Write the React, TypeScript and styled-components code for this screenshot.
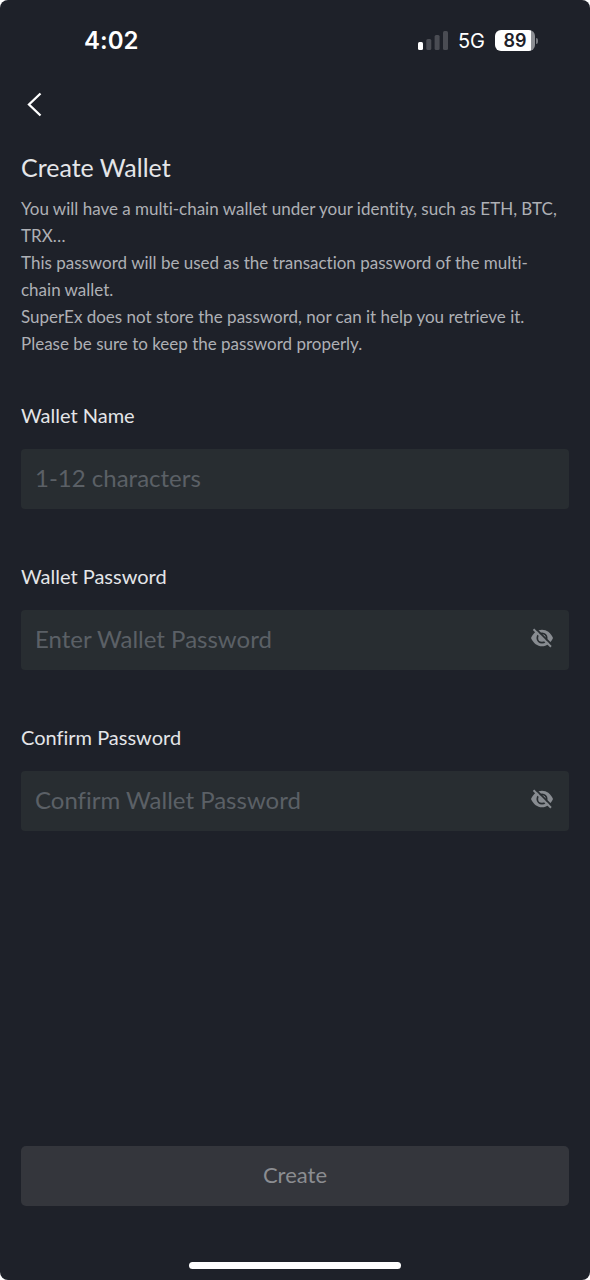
import React, { useState } from 'react';
import styled, { createGlobalStyle } from 'styled-components';

const GlobalStyle = createGlobalStyle`
  *, *::before, *::after { box-sizing: border-box; }
  body { margin: 0; background: #ffffff; }
`;

const uiFont = `Lato, "Noto Sans", "Liberation Sans", sans-serif`;
const systemFont = `Inter, "Liberation Sans", sans-serif`;

const Screen = styled.div`
  display: flex;
  flex-direction: column;
  min-height: 100vh;
  border-radius: 8px;
  background: #1e2129;
  color: #e4e5e8;
  font-family: ${uiFont};
  font-variant-ligatures: none;
`;

const StatusBar = styled.header`
  display: flex;
  align-items: center;
  justify-content: space-between;
  height: 80px;
  padding: 1px 52px 0 84px;
  color: #ffffff;
  font-family: ${systemFont};
`;

const Clock = styled.time`
  font-size: 24px;
  line-height: 32px;
  font-weight: 600;
`;

const Indicators = styled.div`
  display: flex;
  align-items: center;
  gap: 10px;
`;

const Network = styled.span`
  font-size: 20px;
  line-height: 24px;
`;

const Battery = styled.span`
  display: flex;
  align-items: center;
  gap: 1px;
`;

const BatteryBody = styled.span`
  width: 40px;
  height: 21px;
  border-radius: 6px;
  background: linear-gradient(to right, #ffffff 89%, #8c8e93 89%);
  color: #1e2129;
  font-size: 18px;
  line-height: 21px;
  font-weight: 600;
  text-align: center;
`;

const BatteryTip = styled.span`
  width: 2px;
  height: 6px;
  border-radius: 0 2px 2px 0;
  background: #77797f;
`;

const NavBar = styled.nav`
  display: flex;
  align-items: center;
  height: 48px;
  padding: 0 20px;
`;

const IconButton = styled.button`
  display: flex;
  flex: none;
  padding: 0;
  border: 0;
  background: none;
  color: inherit;
  cursor: pointer;
`;

const Form = styled.form`
  display: flex;
  flex: 1;
  flex-direction: column;
  padding: 23px 21px 75px;
`;

const Title = styled.h1`
  margin: 0;
  font-size: 25px;
  line-height: 32px;
  font-weight: 400;
`;

const Intro = styled.div`
  margin-top: 12px;
  padding-right: 8px;
  color: #aeb0b5;
  font-size: 17px;
  line-height: 27px;
`;

const Paragraph = styled.p`
  margin: 0;
`;

const Fields = styled.div`
  display: flex;
  flex-direction: column;
  gap: 56px;
  margin: 47px 0 60px;
`;

const FieldGroup = styled.div`
  display: flex;
  flex-direction: column;
  gap: 23px;
`;

const Label = styled.label`
  font-size: 20px;
  line-height: 22px;
`;

const InputBox = styled.div`
  display: flex;
  align-items: center;
  height: 60px;
  padding: 0 15px 4px 14px;
  border-radius: 4px;
  background: #282d31;
`;

const Input = styled.input`
  flex: 1;
  min-width: 0;
  height: 100%;
  padding: 0;
  border: 0;
  outline: 0;
  background: none;
  color: #e4e5e8;
  font-family: inherit;
  font-size: 24px;
  font-variant-ligatures: none;

  &::placeholder {
    color: #5b6066;
    opacity: 1;
  }
`;

const EyeToggle = styled(IconButton)`
  color: #888c91;
`;

const SubmitButton = styled.button`
  height: 60px;
  margin-top: auto;
  padding: 0 0 4px;
  border: 0;
  border-radius: 5px;
  background: #34363c;
  color: #8b8d91;
  font-family: inherit;
  font-size: 22px;
`;

const HomeIndicator = styled.div`
  align-self: center;
  width: 36%;
  height: 7px;
  margin-top: -19px;
  margin-bottom: 11px;
  border-radius: 4px;
  background: #ffffff;
`;

function SignalIcon() {
  return (
    <svg width="30" height="20" viewBox="0 0 30 20" aria-hidden="true">
      <rect x="0" y="11" width="5" height="8" rx="1.5" fill="#ffffff" />
      <rect x="8.300" y="8" width="5" height="11" rx="1.5" fill="#4a4c53" />
      <rect x="16.600" y="4" width="5" height="15" rx="1.5" fill="#4a4c53" />
      <rect x="25" y="0" width="5" height="19" rx="1.5" fill="#4a4c53" />
    </svg>
  );
}

function BackIcon() {
  return (
    <svg width="28" height="28" viewBox="0 0 28 28" fill="none" aria-hidden="true">
      <path d="M20.500 3.500 9 14.500l11.500 11" stroke="#ffffff" strokeWidth="2.300" />
    </svg>
  );
}

function EyeIcon({ hidden }: { hidden: boolean }) {
  return (
    <svg width="24" height="20" viewBox="0 0 24 20" fill="none" aria-hidden="true">
      <path d="M1 10C3.500 4.500 7.300 1.700 12 1.700s8.500 2.800 11 8.300c-2.500 5.500-6.300 8.300-11 8.300S3.500 15.500 1 10Z" fill="currentColor" />
      <circle cx="12" cy="10" r="4.700" stroke="#282d31" strokeWidth="1.700" />
      {hidden && (
        <>
          <path d="m5.500 .5 17 17" stroke="#282d31" strokeWidth="1.800" />
          <path d="m3.500 1.200 17.500 17.500" stroke="currentColor" strokeWidth="2" />
        </>
      )}
    </svg>
  );
}

type FieldProps = { id: string; label: string; placeholder: string; secret?: boolean };

function Field({ id, label, placeholder, secret = false }: FieldProps) {
  const [hidden, setHidden] = useState(true);
  return (
    <FieldGroup>
      <Label htmlFor={id}>{label}</Label>
      <InputBox>
        <Input id={id} type={secret && hidden ? 'password' : 'text'} placeholder={placeholder} />
        {secret && (
          <EyeToggle type="button" aria-label={hidden ? 'Show password' : 'Hide password'} onClick={() => setHidden(!hidden)}>
            <EyeIcon hidden={hidden} />
          </EyeToggle>
        )}
      </InputBox>
    </FieldGroup>
  );
}

export default function App() {
  return (
    <>
      <GlobalStyle />
      <Screen>
        <StatusBar>
          <Clock>4:02</Clock>
          <Indicators>
            <SignalIcon />
            <Network>5G</Network>
            <Battery>
              <BatteryBody>89</BatteryBody>
              <BatteryTip />
            </Battery>
          </Indicators>
        </StatusBar>
        <NavBar>
          <IconButton type="button" aria-label="Back">
            <BackIcon />
          </IconButton>
        </NavBar>
        <Form onSubmit={(event) => event.preventDefault()}>
          <Title>Create Wallet</Title>
          <Intro>
            <Paragraph>You will have a multi-chain wallet under your identity, such as ETH, BTC, TRX…</Paragraph>
            <Paragraph>This password will be used as the transaction password of the multi-chain wallet.</Paragraph>
            <Paragraph>SuperEx does not store the password, nor can it help you retrieve it.</Paragraph>
            <Paragraph>Please be sure to keep the password properly.</Paragraph>
          </Intro>
          <Fields>
            <Field id="wallet-name" label="Wallet Name" placeholder="1-12 characters" />
            <Field id="wallet-password" label="Wallet Password" placeholder="Enter Wallet Password" secret />
            <Field id="confirm-password" label="Confirm Password" placeholder="Confirm Wallet Password" secret />
          </Fields>
          <SubmitButton type="submit" disabled>Create</SubmitButton>
        </Form>
        <HomeIndicator />
      </Screen>
    </>
  );
}
